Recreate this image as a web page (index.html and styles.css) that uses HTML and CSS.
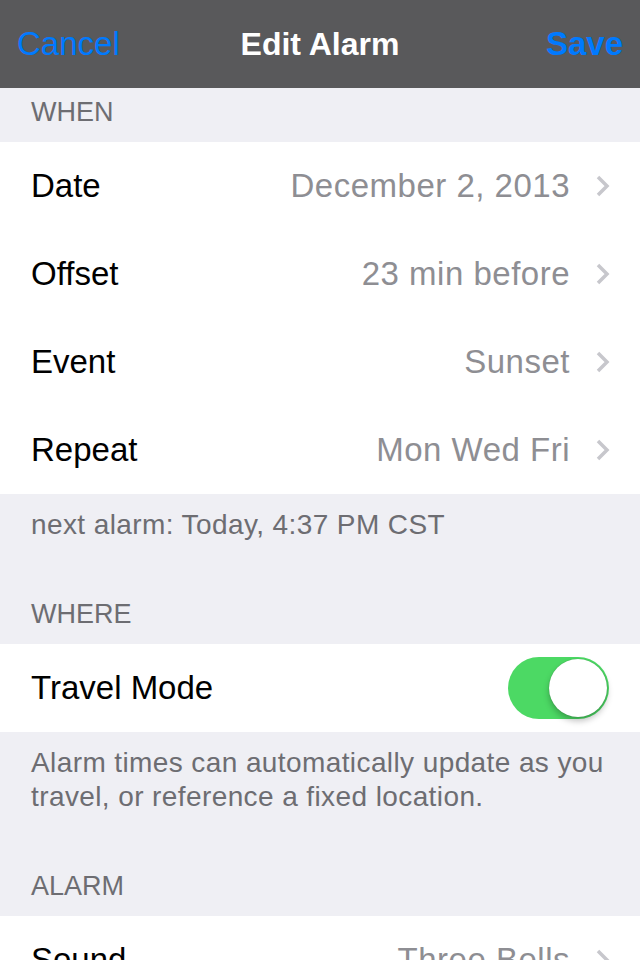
FILE: index.html
```html
<!DOCTYPE html>
<html lang="en">
<head>
    <meta charset="UTF-8">
    <meta name="viewport" content="width=device-width, initial-scale=1.0">
    <title>Edit Alarm</title>
    <link rel="stylesheet" href="styles.css">
</head>
<body>
    <div class="navbar">
        <span class="nav-btn">Cancel</span>
        <span class="nav-title">Edit Alarm</span>
        <span class="nav-btn save">Save</span>
    </div>

    <div class="group">
        <div class="group-header">WHEN</div>
        <div class="cells">
            <div class="cell">
                <span class="label">Date</span>
                <span class="value">December 2, 2013</span>
                <svg class="chevron" viewBox="0 0 14 22"><path d="M2 2 L11 11 L2 20"/></svg>
            </div>
            <div class="cell">
                <span class="label">Offset</span>
                <span class="value">23 min before</span>
                <svg class="chevron" viewBox="0 0 14 22"><path d="M2 2 L11 11 L2 20"/></svg>
            </div>
            <div class="cell">
                <span class="label">Event</span>
                <span class="value">Sunset</span>
                <svg class="chevron" viewBox="0 0 14 22"><path d="M2 2 L11 11 L2 20"/></svg>
            </div>
            <div class="cell">
                <span class="label">Repeat</span>
                <span class="value">Mon Wed Fri</span>
                <svg class="chevron" viewBox="0 0 14 22"><path d="M2 2 L11 11 L2 20"/></svg>
            </div>
        </div>
        <div class="group-footer">next alarm: Today, 4:37 PM CST</div>
    </div>

    <div class="group">
        <div class="group-header">WHERE</div>
        <div class="cells">
            <div class="cell">
                <span class="label">Travel Mode</span>
                <span class="switch on"><span class="knob"></span></span>
            </div>
        </div>
        <div class="group-footer">Alarm times can automatically update as you travel, or reference a fixed location.</div>
    </div>

    <div class="group">
        <div class="group-header">ALARM</div>
        <div class="cells">
            <div class="cell">
                <span class="label">Sound</span>
                <span class="value">Three Bells</span>
                <svg class="chevron" viewBox="0 0 14 22"><path d="M2 2 L11 11 L2 20"/></svg>
            </div>
        </div>
    </div>
</body>
</html>
```

FILE: styles.css
```css
html {
    overflow: hidden;
}
body {
    margin: 0;
    font-family: "Liberation Sans", Arial, sans-serif;
    background: #efeff4;
    color: #000;
}
.navbar {
    display: grid;
    grid-template-columns: 1fr auto 1fr;
    align-items: center;
    height: 88px;
    padding: 0 17px;
    background: #59595b;
}
.nav-btn {
    color: #007aff;
    font-size: 33px;
}
.nav-btn.save {
    justify-self: end;
    font-weight: bold;
}
.nav-title {
    color: #fff;
    font-size: 32px;
    font-weight: bold;
}
.group-header {
    padding: 13px 31px 13px;
    line-height: 34px;
    font-size: 27px;
    color: #6d6d72;
}
.navbar + .group .group-header {
    padding-top: 7px;
}
.cells {
    background: #fff;
}
.cell {
    display: flex;
    align-items: center;
    height: 88px;
    padding: 0 30px 0 31px;
}
.label {
    font-size: 33px;
    flex: 1;
}
.value {
    font-size: 33px;
    letter-spacing: 0.5px;
    color: #8e8e93;
    margin-right: 26px;
}
.chevron {
    width: 14px;
    height: 22px;
    fill: none;
    stroke: #c7c7cc;
    stroke-width: 3.5;
}
.group-footer {
    padding: 14px 31px 42.5px;
    line-height: 33.5px;
    font-size: 28px;
    letter-spacing: 0.4px;
    color: #6d6d72;
}
.switch {
    position: relative;
    width: 101px;
    height: 62px;
    border-radius: 31px;
    background: #4cd964;
    margin-right: 1px;
}
.knob {
    position: absolute;
    top: 2px;
    right: 2px;
    width: 58px;
    height: 58px;
    border-radius: 50%;
    background: #fff;
    box-shadow: 0 4px 6px rgba(0, 0, 0, 0.25), 0 0 1px rgba(0, 0, 0, 0.3);
}
```
